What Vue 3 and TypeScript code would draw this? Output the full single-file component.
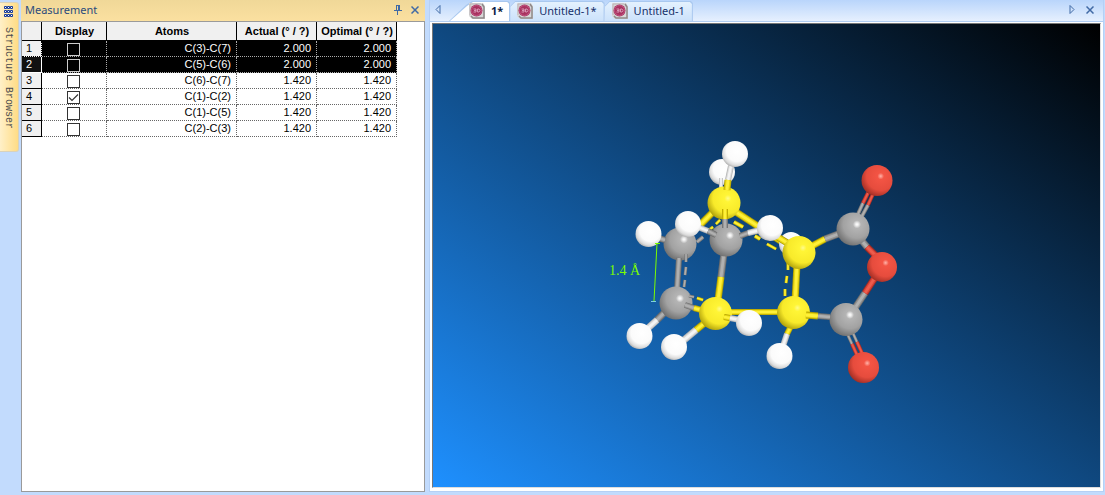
<script setup lang="ts">
import { ref } from 'vue'

interface Row { atoms: string; actual: string; optimal: string; shown: boolean; selected: boolean }
type Kind = 'H' | 'C' | 'O' | 'Y'
interface Atom { t: 'atom'; k: Kind; x: number; y: number; r: number }
interface Seg { t: 'seg'; k: Kind; x1: number; y1: number; x2: number; y2: number; w: number }

const rows = ref<Row[]>([
  { atoms: 'C(3)-C(7)', actual: '2.000', optimal: '2.000', shown: false, selected: true },
  { atoms: 'C(5)-C(6)', actual: '2.000', optimal: '2.000', shown: false, selected: true },
  { atoms: 'C(6)-C(7)', actual: '1.420', optimal: '1.420', shown: false, selected: false },
  { atoms: 'C(1)-C(2)', actual: '1.420', optimal: '1.420', shown: true, selected: false },
  { atoms: 'C(1)-C(5)', actual: '1.420', optimal: '1.420', shown: false, selected: false },
  { atoms: 'C(2)-C(3)', actual: '1.420', optimal: '1.420', shown: false, selected: false },
])

const tabs = ['1*', 'Untitled-1*', 'Untitled-1']
const active = ref(0)

const tones: Record<Kind, string[]> = {
  H: ['#b4b4b4', '#dadada', '#f4f4f4'],
  C: ['#6c6c6c', '#929292', '#b0b0b0'],
  O: ['#9c2b22', '#d8443a', '#ee5c4c'],
  Y: ['#b3a000', '#e8d713', '#fff03a'],
}

const atom = (k: Kind, x: number, y: number, r: number): Atom => ({ t: 'atom', k, x, y, r })
const seg = (k: Kind, x1: number, y1: number, x2: number, y2: number, w = 7): Seg => ({ t: 'seg', k, x1, y1, x2, y2, w })

// Painted back to front.
const scene: (Atom | Seg)[] = [
  atom('H', 722, 172, 13),
  seg('H', 721, 178, 721, 190, 4),
  seg('Y', 714, 211, 698, 227),
  seg('Y', 736, 212, 790, 247),
  seg('Y', 720, 220, 716, 224, 3),
  seg('Y', 713, 227, 709, 230, 3),
  seg('C', 703, 237, 697, 242, 4),
  seg('Y', 734, 222, 743, 227, 4),
  seg('Y', 755, 236, 760, 239, 4),
  seg('Y', 767, 244, 776, 249, 3),
  atom('Y', 724, 203, 16.5),
  seg('H', 731, 166, 728, 180, 6),
  seg('Y', 728, 180, 727, 190, 7),
  atom('H', 735, 154, 13),
  atom('H', 791, 244, 12),
  seg('Y', 788, 263, 788, 270, 3),
  seg('Y', 787, 276, 786, 283, 3),
  seg('Y', 785, 289, 785, 296, 3),
  atom('C', 680, 244, 16.5),
  seg('C', 679, 258, 677, 290, 6),
  seg('C', 686, 254, 686, 262, 3),
  seg('C', 686, 267, 685, 275, 3),
  seg('C', 685, 280, 684, 287, 3),
  seg('H', 650, 235, 659, 238, 6),
  seg('C', 658, 238, 665, 240, 6),
  atom('H', 648.5, 234, 13),
  seg('C', 724, 253, 721, 277),
  seg('Y', 721, 277, 718, 300),
  atom('C', 726, 240, 16.5),
  seg('Y', 725, 209, 725, 219, 6),
  seg('C', 725, 219, 725, 228, 6),
  seg('H', 698, 227, 708, 231, 6),
  seg('C', 708, 231, 716, 235, 6),
  atom('H', 688, 224, 13),
  seg('C', 740, 236, 748, 233, 6),
  seg('H', 748, 233, 760, 230, 6),
  seg('Y', 776, 236, 789, 244, 7),
  atom('H', 770, 228, 13),
  seg('Y', 797, 264, 795, 302),
  seg('Y', 810, 247, 825, 239),
  seg('C', 825, 239, 841, 233),
  atom('Y', 799, 252.5, 16.5),
  seg('C', 858, 236, 867, 247),
  seg('O', 867, 247, 878, 258),
  seg('C', 858, 214, 863, 203, 4),
  seg('O', 863, 203, 868, 193, 4),
  seg('C', 862, 216, 868, 205, 4),
  seg('O', 868, 205, 873, 194, 4),
  atom('C', 853, 229, 16.5),
  atom('O', 877, 180.5, 15.5),
  seg('C', 855, 308, 865, 293),
  seg('O', 865, 293, 876, 276),
  atom('O', 882, 267, 15),
  seg('C', 846, 331, 852, 344, 3),
  seg('O', 852, 344, 857, 355, 4),
  seg('C', 852, 331, 857, 342, 3),
  seg('O', 857, 342, 862, 353, 4),
  atom('C', 846, 319.5, 16.5),
  atom('O', 863.5, 367.5, 15.5),
  seg('Y', 729, 312, 782, 312, 6),
  seg('Y', 791, 326, 787, 334, 6),
  seg('H', 787, 334, 783, 346, 6),
  atom('Y', 793.5, 312.5, 16.5),
  atom('H', 779.5, 356, 13),
  seg('Y', 806, 315, 818, 316, 7),
  seg('C', 818, 316, 830, 317, 6),
  seg('C', 665, 312, 657, 320),
  seg('H', 657, 320, 647, 329),
  atom('C', 676, 303, 16.5),
  atom('H', 639.5, 336, 13),
  seg('C', 689, 296, 694, 297, 3),
  seg('Y', 697, 298, 703, 300, 3),
  seg('C', 685, 305, 694, 308, 6),
  seg('Y', 694, 308, 705, 311, 6),
  seg('Y', 707, 321, 696, 330),
  seg('H', 696, 330, 684, 340),
  atom('Y', 715.5, 313.5, 16.5),
  atom('H', 674, 347, 13),
  seg('Y', 724, 317, 730, 318, 6),
  seg('H', 730, 318, 740, 320, 6),
  atom('H', 749, 323, 13),
]
</script>

<template>
  <main class="app">
    <aside class="rail">
      <button class="rail-tab" type="button">
        <svg width="10" height="12" viewBox="0 0 10 12" aria-hidden="true">
          <path d="M.5.5h2v2h-2zM3.5.5h2v2h-2zM6.5.5h2v2h-2zM.5 4.500h2v2h-2zM3.500 4.500h2v2h-2zM6.500 4.500h2v2h-2zM.5 8.500h2v2h-2zM3.500 8.500h2v2h-2zM6.500 8.500h2v2h-2z" fill="#fff" stroke="#12389a" />
        </svg>
        <span>Structure Browser</span>
      </button>
    </aside>

    <section class="panel">
      <header class="panel-head">
        <h2>Measurement</h2>
        <button type="button" aria-label="Pin">
          <svg width="8" height="10" viewBox="0 0 8 10"><path d="M2.500 0V5.500M2 .5H6M5.500 0V5.500M4.500 0V5.500M0 5.500H8M3.500 6V10" fill="none" stroke="#416aa5" /></svg>
        </button>
        <button type="button" aria-label="Close panel">
          <svg width="8" height="8" viewBox="0 0 8 8"><path d="M.5.5L7.500 7.500M7.500.5L.5 7.500" stroke="#416aa5" stroke-width="1.500" /></svg>
        </button>
      </header>
      <div class="panel-body">
        <table>
          <colgroup><col class="c-num"><col class="c-disp"><col class="c-atoms"><col class="c-val"><col class="c-val"></colgroup>
          <thead>
            <tr><th></th><th>Display</th><th>Atoms</th><th>Actual (° / ?)</th><th>Optimal (° / ?)</th></tr>
          </thead>
          <tbody>
            <tr v-for="(row, i) in rows" :key="i" :class="{ selected: row.selected, current: i === 0 }">
              <th scope="row">{{ i + 1 }}</th>
              <td class="check"><input v-model="row.shown" type="checkbox" :aria-label="'Display ' + row.atoms"></td>
              <td>{{ row.atoms }}</td>
              <td>{{ row.actual }}</td>
              <td>{{ row.optimal }}</td>
            </tr>
          </tbody>
        </table>
      </div>
    </section>

    <section class="docs">
      <nav class="tabbar">
        <button class="arrow" type="button" aria-label="Previous tabs">
          <svg width="6" height="9" viewBox="0 0 6 9"><path d="M5 .5V8.500L1 4.500Z" fill="none" stroke="#416aa5" /></svg>
        </button>
        <div class="tabs">
          <button v-for="(name, i) in tabs" :key="name" type="button" class="tab" :class="{ active: i === active }" @click="active = i">
            <svg width="16" height="16" viewBox="0 0 16 16" aria-hidden="true">
              <path d="M0 0H14L16 3V16H3L0 13Z" fill="#d8d8d8" />
              <path d="M13 1L15 4V15H4L2 13" fill="none" stroke="#8e8888" stroke-width="1.500" />
              <path d="M1 12V1H12" fill="none" stroke="#bdb4b8" />
              <circle cx="7.500" cy="7.500" r="6" fill="#a8325f" />
              <circle cx="7.500" cy="7.500" r="5" fill="none" stroke="#c25482" />
              <path d="M4.500 6H7V9H4.500M5 7.500H7M8.500 6V9H10L11 7.500L10 6Z" fill="none" stroke="#d795b3" />
            </svg>
            <span>{{ name }}</span>
          </button>
        </div>
        <button class="arrow next" type="button" aria-label="Next tabs">
          <svg width="6" height="9" viewBox="0 0 6 9"><path d="M1 .5V8.500L5 4.500Z" fill="none" stroke="#416aa5" /></svg>
        </button>
        <button class="arrow" type="button" aria-label="Close document">
          <svg width="8" height="8" viewBox="0 0 8 8"><path d="M.5.5L7.500 7.500M7.500.5L.5 7.500" stroke="#416aa5" stroke-width="1.500" /></svg>
        </button>
      </nav>
      <div class="frame">
        <div class="canvas">
          <svg viewBox="433 24 667 463" role="img" aria-label="Molecule model">
            <defs>
              <radialGradient id="ball-H" cx=".58" cy=".38" r=".68">
                <stop offset="0" stop-color="#fff" /><stop offset=".6" stop-color="#fbfbfb" /><stop offset=".82" stop-color="#dcdcdc" /><stop offset="1" stop-color="#a0a0a0" />
              </radialGradient>
              <radialGradient id="ball-C" cx=".62" cy=".36" r=".76">
                <stop offset="0" stop-color="#fff" /><stop offset=".06" stop-color="#ececec" /><stop offset=".16" stop-color="#b4b4b4" /><stop offset=".55" stop-color="#a2a2a2" /><stop offset="1" stop-color="#606060" />
              </radialGradient>
              <radialGradient id="ball-O" cx=".62" cy=".36" r=".76">
                <stop offset="0" stop-color="#ffb4aa" /><stop offset=".14" stop-color="#f35444" /><stop offset=".6" stop-color="#e64c3d" /><stop offset="1" stop-color="#8b241c" />
              </radialGradient>
              <radialGradient id="ball-Y" cx=".62" cy=".36" r=".76">
                <stop offset="0" stop-color="#fffb8c" /><stop offset=".14" stop-color="#fff536" /><stop offset=".6" stop-color="#f8ea2a" /><stop offset="1" stop-color="#978800" />
              </radialGradient>
            </defs>
            <template v-for="(s, i) in scene" :key="i">
              <circle v-if="s.t === 'atom'" :cx="s.x" :cy="s.y" :r="s.r" :fill="`url(#ball-${s.k})`" />
              <g v-else>
                <line v-for="(c, n) in tones[s.k]" :key="n" :x1="s.x1" :y1="s.y1" :x2="s.x2" :y2="s.y2" :stroke="c" :stroke-width="s.w * [1, 0.75, 0.4][n]" />
              </g>
            </template>
            <path d="M657 243.500L654 301M655 243.500H660" fill="none" stroke="#7cfc00" />
            <path d="M651 301.500H656" stroke="#7fd0e0" />
            <text x="609" y="275" class="measure">1.4 Å</text>
          </svg>
        </div>
      </div>
    </section>
  </main>
</template>

<style>
body { margin: 0; background: #c2dbfd; }
</style>

<style scoped>
* { box-sizing: border-box; }
.app {
  display: flex;
  height: 100vh;
  padding-bottom: 3px;
  background: #c2dbfd;
  font-family: "Liberation Sans", Arial, sans-serif;
}
button { margin: 0; padding: 0; border: 0; background: none; font: inherit; }
.rail { flex: 0 0 21px; padding-top: 2px; }
.rail-tab {
  display: flex;
  flex-direction: column;
  align-items: flex-start;
  gap: 9px;
  width: 19px;
  height: 150px;
  padding: 3px 0 0 4px;
  border: 1px solid #d9d2bb;
  border-left: 0;
  border-radius: 0 3px 3px 0;
  background: linear-gradient(to right, #fff0c8, #ffdc85);
}
.rail-tab svg { flex: none; }
.rail-tab span {
  writing-mode: vertical-rl;
  font: 10px/8px "Liberation Mono", monospace;
  color: #4c4c50;
  white-space: nowrap;
}
.panel {
  display: flex;
  flex-direction: column;
  flex: 0 0 404px;
}
.panel-head {
  display: flex;
  align-items: center;
  gap: 9px;
  height: 21px;
  padding: 0 6px 2px 4px;
  background: linear-gradient(#f0d898, #fbe0a0);
}
.panel-head h2 {
  flex: 1;
  margin: 0;
  font: 11px/18px "Noto Sans", sans-serif;
  color: #2b4b7c;
}
.panel-head svg, .arrow svg { display: block; }
.panel-body { flex: 1; border: 1px solid #9a9a9a; background: #fff; }
table {
  width: 375px;
  table-layout: fixed;
  border-collapse: separate;
  border-spacing: 0;
  font-size: 11px;
  line-height: 15px;
  color: #000;
}
.c-num { width: 20px; }
.c-disp { width: 65px; }
.c-atoms { width: 130px; }
.c-val { width: 80px; }
th, td { height: 16px; padding: 0 5px 0 0; white-space: nowrap; }
thead th {
  height: 19px;
  padding: 1px 0 0 1px;
  border-right: 1px solid #000;
  border-bottom: 1px solid #000;
  background: #f0f0f0;
  font-weight: 700;
  text-align: center;
}
tbody th {
  padding-left: 4px;
  border-right: 1px solid #000;
  border-bottom: 1px solid #000;
  background: #f0f0f0;
  font-weight: 400;
  text-align: left;
}
td { border-right: 1px dotted #666; border-bottom: 1px dotted #666; text-align: right; }
.selected td { background: #000; color: #fff; border-color: #aaa; }
.selected th { background: #111; color: #fff; border-right-color: #fff; border-bottom-color: #fff; }
.current th { background: #f0f0f0; color: #000; border-right: 1px dotted #000; border-bottom: 1px dotted #000; }
td.check { padding: 2px 2px 0 0; text-align: center; }
.check input {
  appearance: none;
  display: block;
  width: 13px;
  height: 13px;
  margin: 0 auto;
  border: 1px solid #333;
  background: #fff;
}
.selected .check input { border-color: #ccc; background: #000; }
.check input:checked {
  background: #fff url("data:image/svg+xml,%3Csvg xmlns='http://www.w3.org/2000/svg' viewBox='0 0 11 11'%3E%3Cpath d='M1 5.500L4 8.500L10 2.500' fill='none' stroke='%23333' stroke-width='1.200'/%3E%3C/svg%3E") center / 11px 11px no-repeat;
}
.docs {
  display: flex;
  flex-direction: column;
  flex: 1;
  min-width: 0;
  margin: 0 1px 0 4px;
  border: 1px solid #b5d0f5;
  border-top: 0;
}
.tabbar {
  display: flex;
  align-items: center;
  height: 22px;
  padding: 0 9px 2px 5px;
  border-bottom: 1px solid #b0cdf2;
  background: linear-gradient(#b9d5fb, #e6f0fe);
}
.arrow.next { margin-right: 11px; }
.tabs { display: flex; align-self: flex-end; flex: 1; margin: 0 0 -2px 8px; }
.tab {
  position: relative;
  display: flex;
  align-items: center;
  gap: 6px;
  height: 20px;
  padding: 0 8px 1px 7px;
  background: #a9c8ef;
  clip-path: polygon(0 5px, 5px 0, calc(100% - 2px) 0, 100% 2px, 100% 100%, 0 100%);
  font: 11px/18px "Noto Sans", sans-serif;
  color: #15306a;
}
.tab::before {
  content: "";
  position: absolute;
  inset: 1px 1px 0 0;
  background: linear-gradient(#e4f1fe, #cce2fb);
  clip-path: polygon(0 5px, 5px 0, calc(100% - 2px) 0, 100% 2px, 100% 100%, 0 100%);
}
.tab > * { position: relative; }
.tab.active {
  padding: 0 7px 1px 20px;
  font-weight: 700;
  color: #0c1c44;
  clip-path: polygon(0 100%, 17px 4px, 23px 0, calc(100% - 2px) 0, 100% 2px, 100% 100%);
}
.tab.active::before {
  background: #fff;
  clip-path: polygon(1px 100%, 18px 4px, 24px 0, calc(100% - 2px) 0, 100% 2px, 100% 100%);
}
.frame { flex: 1; min-height: 0; padding: 1px 2px 3px; background: #fff; }
.canvas {
  height: 100%;
  border: 1px solid;
  border-color: #777 #ddd #ddd #777;
  background: linear-gradient(to top right, #1e90ff, #000);
}
.canvas svg { display: block; width: 100%; height: 100%; }
.measure { font: 14px "Liberation Serif", serif; fill: #7cfc00; }
</style>
